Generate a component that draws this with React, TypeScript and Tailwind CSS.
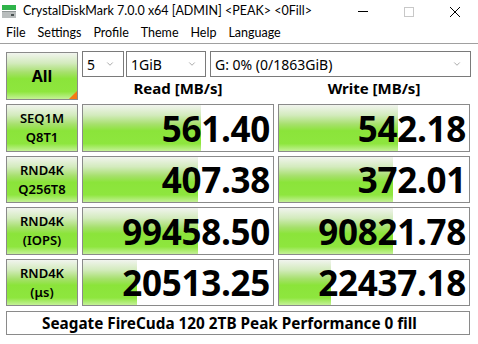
import { ChevronDown } from 'lucide-react';

const rows = [
  { l1: 'SEQ1M', l2: 'Q8T1', read: '561.40', rw: 118, write: '542.18', ww: 119 },
  { l1: 'RND4K', l2: 'Q256T8', read: '407.38', rw: 115, write: '372.01', ww: 114 },
  { l1: 'RND4K', l2: '(IOPS)', read: '99458.50', rw: 115, write: '90821.78', ww: 114 },
  { l1: 'RND4K', l2: '(μs)', read: '20513.25', rw: 54, write: '22437.18', ww: 52 },
];

const green =
  'bg-[linear-gradient(to_bottom,#f1f4ee_0%,#d3ebbd_22%,#a6e06c_42%,#8be43a_56%,#8ee63e_84%,#c4f197_100%)]';

function Select({ value, className }: { value: string; className: string }) {
  return (
    <div className={`h-[26px] border border-[#7a7a7a] bg-white flex items-center justify-between pl-[4px] pr-[8px] text-[14px] ${className}`}>
      <span>{value}</span>
      <ChevronDown size={10} strokeWidth={1.2} className="text-[#555]" />
    </div>
  );
}

function ValueBox({ value, width }: { value: string; width: number }) {
  return (
    <div className="relative h-full border border-[#8a8a8a] bg-white flex items-center justify-end pr-[3px]">
      <div className={`absolute left-0 top-0 bottom-0 ${green}`} style={{ width }} />
      <span className="relative font-['Open_Sans'] font-bold text-[35px] leading-none tracking-[-0.3px]">{value}</span>
    </div>
  );
}

export default function App() {
  return (
    <div className="w-[478px] h-[344px] bg-white text-black font-['Noto_Sans',sans-serif] overflow-hidden">
      {/* title bar */}
      <div className="h-[23px] flex items-center relative">
        <svg width="15" height="15" viewBox="0 0 15 15" className="ml-[2px]">
          <rect x="0" y="1" width="14" height="5" fill="#2fb44a" />
          <rect x="0" y="7" width="14" height="7" fill="#b9bdbd" />
          <rect x="0" y="7" width="14" height="1" fill="#8f9595" />
          <rect x="9" y="10" width="3" height="2" fill="#4b5252" />
        </svg>
        <span className="ml-[6px] font-['Lato',sans-serif] text-[12.5px] leading-none">CrystalDiskMark 7.0.0 x64 [ADMIN] &lt;PEAK&gt; &lt;0Fill&gt;</span>
        <div className="ml-auto flex items-center h-full">
          <div className="w-[46px] flex justify-center"><div className="w-[10px] h-px bg-black" /></div>
          <div className="w-[46px] flex justify-center"><div className="w-[10px] h-[10px] border border-[#c8c8c8]" /></div>
          <div className="w-[46px] flex justify-center">
            <svg width="10" height="10" viewBox="0 0 10 10"><path d="M0 0 L10 10 M10 0 L0 10" stroke="#000" strokeWidth="1" /></svg>
          </div>
        </div>
      </div>
      {/* menu */}
      <div className="h-[21px] flex items-center font-['Lato',sans-serif] text-[12.5px] border-b border-[#a0a0a0] pl-[6px] gap-[12px]">
        {['File', 'Settings', 'Profile', 'Theme', 'Help', 'Language'].map(m => (
          <span key={m}>{m}</span>
        ))}
      </div>

      <div className="pl-[6px] pr-[8px] pt-[7px]">
        <div className="flex gap-[4px]">
          <div className={`relative mt-[1px] w-[72px] h-[48px] border border-[#8a8a8a] flex items-center justify-center font-bold text-[16px] ${green}`}>
            All
            <div className="absolute right-0 bottom-0 w-0 h-0 border-l-[8px] border-l-transparent border-b-[8px] border-b-[#f47a14]" />
          </div>
          <div className="flex-1 flex flex-col">
            <div className="flex gap-[2px]">
              <Select value="5" className="w-[42px]" />
              <Select value="1GiB" className="w-[80px]" />
              <Select value="G: 0% (0/1863GiB)" className="ml-[2px] flex-1 mr-[-1px]" />
            </div>
            <div className="flex h-[23px] items-center font-bold text-[15px] gap-[4px]">
              <div className="w-[192px] text-center">Read [MB/s]</div>
              <div className="w-[192px] text-center">Write [MB/s]</div>
            </div>
          </div>
        </div>

        <div className="mt-[4px] flex flex-col gap-[4px]">
          {rows.map((r, i) => (
            <div key={i} className={`flex gap-[4px] ${i % 2 === 0 ? 'h-[48px]' : 'h-[47px]'}`}>
              <div className={`w-[72px] border border-[#8a8a8a] flex flex-col items-center justify-center font-semibold text-[13px] leading-[19px] ${green}`}>
                <span>{r.l1}</span>
                <span>{r.l2}</span>
              </div>
              <div className="w-[192px]"><ValueBox value={r.read} width={r.rw} /></div>
              <div className="w-[192px]"><ValueBox value={r.write} width={r.ww} /></div>
            </div>
          ))}
        </div>

        <div className="mt-[5px] h-[24px] border border-[#8a8a8a] flex items-center justify-center font-bold text-[15.3px] pr-[17px]">
          Seagate FireCuda 120 2TB Peak Performance 0 fill
        </div>
      </div>
    </div>
  );
}
